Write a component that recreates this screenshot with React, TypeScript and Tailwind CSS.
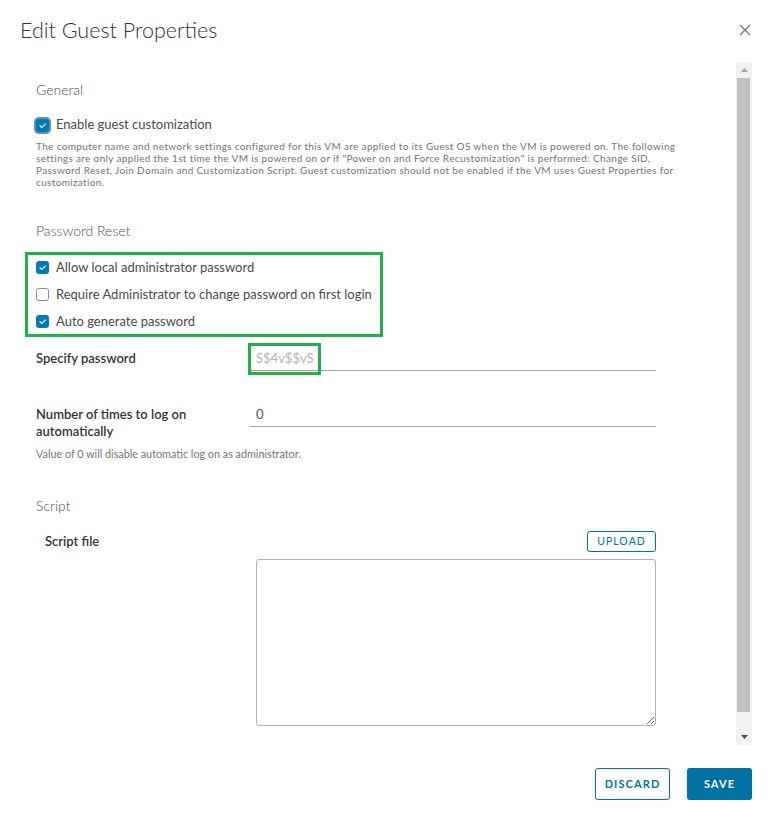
import React from "react";

function Check({ checked, focus }: { checked?: boolean; focus?: boolean }) {
  if (!checked) {
    return <span className="h-[13px] w-[13px] shrink-0 rounded-[3px] border border-[#8c8c8c] bg-white" />;
  }
  return (
    <span
      className={
        focus
          ? "flex h-[13px] w-[13px] shrink-0 items-center justify-center rounded-[3px] bg-[#0079b8] shadow-[0_0_0_2px_#5b8fb8]"
          : "flex h-[13px] w-[13px] shrink-0 items-center justify-center rounded-[3px] bg-[#0079b8]"
      }
    >
      <svg width="13" height="13" viewBox="0 0 13 13">
        <path d="M3.6 6.4 L5.7 8.5 L9.6 4.6" stroke="white" strokeWidth="1.2" fill="none" />
      </svg>
    </span>
  );
}

function CheckRow({ label, checked, focus, h = "h-[20px]" }: { label: string; checked?: boolean; focus?: boolean; h?: string }) {
  return (
    <div className={`flex items-center gap-[7px] ${h}`}>
      <Check checked={checked} focus={focus} />
      <span className="text-[13px] text-[#4a4a4a]">{label}</span>
    </div>
  );
}

function Scrollbar() {
  return (
    <div className="flex w-[16px] shrink-0 flex-col bg-[#f1f1f1]">
      <div className="flex h-[16px] items-center justify-center">
        <svg width="7" height="4" viewBox="0 0 7 4">
          <path d="M0 4 L3.5 0 L7 4 Z" fill="#a3a3a3" />
        </svg>
      </div>
      <div className="ml-[1px] mr-[2px] h-[634px] bg-[#c1c1c1]" />
      <div className="flex-1" />
      <div className="flex h-[16px] items-center justify-center">
        <svg width="7" height="4" viewBox="0 0 7 4">
          <path d="M0 0 L7 0 L3.5 4 Z" fill="#505050" />
        </svg>
      </div>
    </div>
  );
}

export default function App() {
  return (
    <div className="flex h-[820px] w-[770px] flex-col bg-white font-['Lato',sans-serif]">
      {/* Header */}
      <div className="flex h-[62px] shrink-0 items-start justify-between pl-5 pr-[19px] pt-[15px]">
        <h1 className="text-[21.5px] font-light leading-[30px] text-[#313131]">Edit Guest Properties</h1>
        <svg width="12" height="12" viewBox="0 0 12 12" className="mt-[9px]">
          <path d="M1 1 L11 11 M11 1 L1 11" stroke="#737373" strokeWidth="1.2" />
        </svg>
      </div>

      {/* Body */}
      <div className="flex h-[683px] shrink-0 pl-5 pr-[18px]">
        <div className="flex-1 overflow-hidden pl-4 pt-[18px]">
          <div className="text-[14px] font-light leading-[20px] text-[#4d4d4d]">General</div>
          <div className="mt-[15px]">
            <CheckRow label="Enable guest customization" checked focus />
          </div>
          <p className="mt-[5px] whitespace-nowrap text-[10px] leading-[12px] tracking-[0.35px] text-[#737373]">
            The computer name and network settings configured for this VM are applied to its Guest OS when the VM is powered on. The following
            <br />
            settings are only applied the 1st time the VM is powered on or if "Power on and Force Recustomization" is performed: Change SID,
            <br />
            Password Reset, Join Domain and Customization Script. Guest customization should not be enabled if the VM uses Guest Properties for
            <br />
            customization.
          </p>

          <div className="mt-[33px] text-[14px] font-light leading-[20px] text-[#4d4d4d]">Password Reset</div>
          <div className="-ml-[11px] mt-[11px] h-[85px] w-[358px] border-[3px] border-[#21b04b] pl-[8px]">
            <div className="-my-[1px] flex flex-col">
              <CheckRow label="Allow local administrator password" checked h="h-[27px]" />
              <CheckRow label="Require Administrator to change password on first login" h="h-[27px]" />
              <CheckRow label="Auto generate password" checked h="h-[27px]" />
            </div>
          </div>

          <div className="mt-[10px] flex w-[620px] items-center">
            <div className="w-[214px] shrink-0 text-[13px] font-semibold text-[#333]">Specify password</div>
            <div className="relative flex h-[24px] flex-1 items-center border-b border-[#a6a6a6] pl-[6px] text-[13px] text-[#b3b3b3]">
              S$4v$$vS
              <div className="absolute -left-[2px] -top-[4px] h-[32px] w-[73px] border-[3px] border-[#21b04b]" />
            </div>
          </div>

          <div className="mt-[32px] flex w-[620px] items-start">
            <div className="w-[214px] shrink-0 pr-[20px] pt-[3px] text-[13px] font-semibold leading-[17px] text-[#333]">
              Number of times to log on automatically
            </div>
            <div className="flex h-[24px] flex-1 items-center border-b border-[#a6a6a6] pl-[6px] text-[13px] text-[#565656]">0</div>
          </div>
          <p className="mt-[7px] text-[10.8px] leading-[13px] text-[#737373]">
            Value of 0 will disable automatic log on as administrator.
          </p>

          <div className="mt-[36px] text-[14px] font-light leading-[20px] text-[#4d4d4d]">Script</div>
          <div className="mt-[15px] flex w-[620px] items-center justify-between">
            <div className="pl-[9px] text-[13px] font-semibold text-[#333]">Script file</div>
            <button className="flex h-[21px] w-[69px] items-center justify-center rounded-[3px] border border-[#0072a3] text-[10.5px] font-normal tracking-[0.1em] text-[#0072a3]">
              UPLOAD
            </button>
          </div>
          <textarea className="ml-[220px] mt-[7px] block h-[167px] w-[400px] rounded-[3px] border border-[#b3b3b3] bg-white outline-none" />
        </div>
        <Scrollbar />
      </div>

      {/* Footer */}
      <div className="flex flex-1 items-start justify-end gap-[17px] pr-[18px] pt-[23px]">
        <button className="flex h-[32px] w-[75px] items-center justify-center rounded-[3px] border border-[#0072a3] text-[11px] font-bold tracking-[0.1em] text-[#0072a3]">
          DISCARD
        </button>
        <button className="flex h-[32px] w-[65px] items-center justify-center rounded-[3px] bg-[#0072a3] text-[11px] font-bold tracking-[0.1em] text-white">
          SAVE
        </button>
      </div>
    </div>
  );
}
